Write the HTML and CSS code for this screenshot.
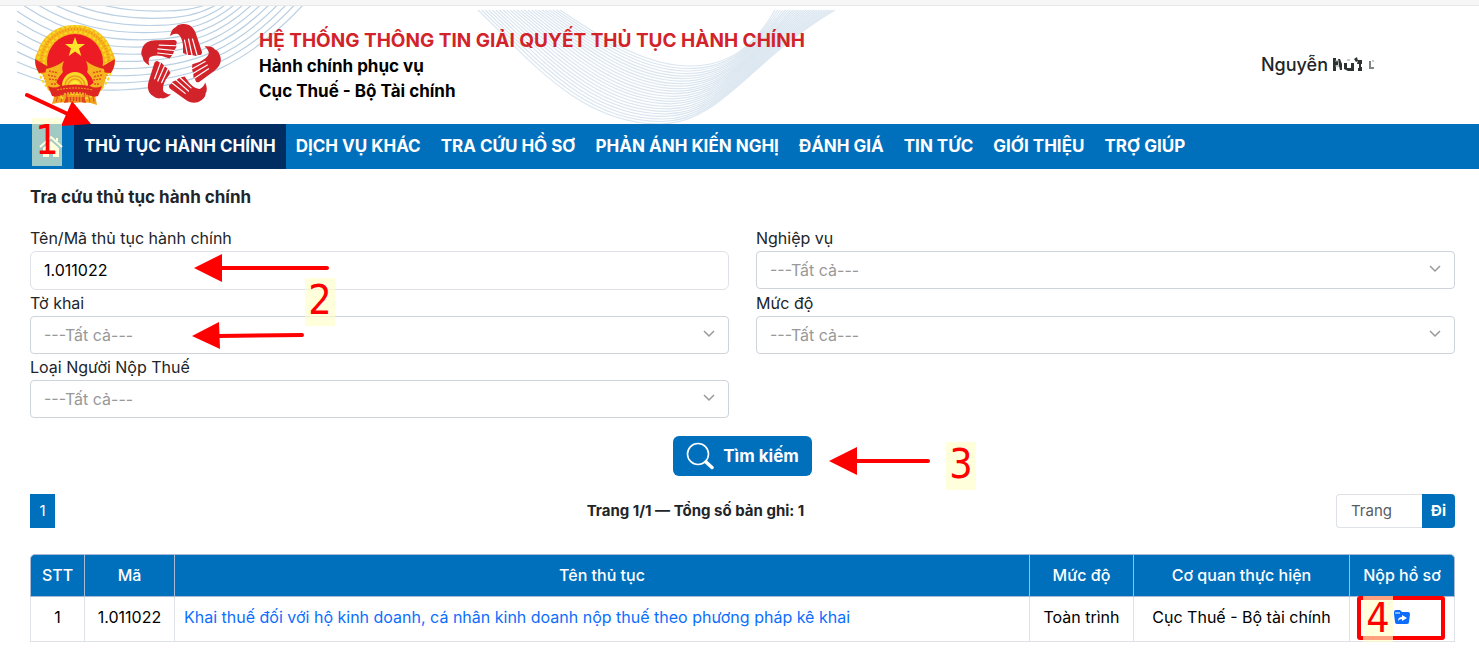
FILE: index.html
```html
<!DOCTYPE html>
<html lang="vi">
<head>
<meta charset="utf-8">
<meta name="viewport" content="width=device-width, initial-scale=1">
<title>Thủ tục hành chính</title>
<link rel="stylesheet" href="styles.css">
</head>
<body>
<div class="topstrip"></div>
<header class="header">
  <svg class="waves" width="860" height="118" viewBox="0 6 860 118" aria-hidden="true">
    <g id="waves-left" fill="none" stroke="#b9cfe2" stroke-width="1.2"></g>
    <g id="waves-mid" fill="none" stroke="#dbe6f0" stroke-width="1.2"></g>
  </svg>
  <div class="logos">
    <svg width="82" height="82" viewBox="0 0 82 82" role="img" aria-label="Quốc huy">
      <path d="M22 66L18 80Q29 77 41 79Q54 77 63 81L60 66Z" fill="#f4a21c"/>
      <path d="M25 68l-3 10M29 68l-2 10M33 69l-1 9M50 69l1 9M54 68l2 10M58 67l2 11" stroke="#dc5a1e" fill="none"/>
      <path d="M41 1C60 1 73 12 78 27C80 31 81 33 81 37C81 44 77 49 73 51L68 66H14L9 51C5 49 1 44 1 37C1 33 2 31 4 27C9 12 22 1 41 1Z" fill="#f8b81a"/>
      <circle cx="41" cy="39" r="37" fill="none" stroke="#f3dd2c" stroke-width="2" stroke-dasharray="3 2"/>
      <circle cx="41" cy="39" r="34" fill="none" stroke="#ea8d1d" stroke-width="2" stroke-dasharray="1 2"/>
      <circle cx="41" cy="39" r="31" fill="none" stroke="#f6dc25" stroke-width="2" stroke-dasharray="3 2"/>
      <circle cx="41" cy="38" r="28" fill="#ed1c24"/>
      <path d="M41 13l2.500 7h7.500l-6 4.500 2.300 7.500-6.300-4.500-6.300 4.500 2.300-7.500-6-4.500h7.500z" fill="#fde32b"/>
      <path d="M1 35l12 7 12-5-8 11-12 1Q1 43 1 35zM81 35l-12 7-12-5 8 11 12 1q4-6 4-14z" fill="#e2231f"/>
      <path d="M12 45q10-2 18-8q-3 7-1 11l-4 5q-4 6-3 13l-7 1q-6-10-3-22zM70 45q-10-2-18-8q3 7 1 11l4 5q4 6 3 13l7 1q6-10 3-22z" fill="#f5b31f"/>
      <path d="M15 47l9 2M14 51l9 2M15 55l8 1M17 60l6 0M67 47l-9 2M68 51l-9 2M67 55l-8 1M65 60l-6 0" stroke="#df541c" stroke-width="1.500" stroke-dasharray="2 1"/>
      <path d="M28 62a13 14 0 0 1 26 0z" fill="#f9d92a"/>
      <path d="M31 62a10 10 0 0 1 20 0M34 62a7 7 0 0 1 14 0" fill="none" stroke="#ef9d1e" stroke-width="1.500"/>
      <circle cx="41" cy="61" r="4" fill="#fdeb35"/>
      <path d="M14 62q6 3 12 0q15-3 30 0q6 3 12 0l-4 10q-5 2-9-1q-14-3-28 0q-4 3-9 1z" fill="#df281f"/>
      <path d="M23 66q18-4 36 0" fill="none" stroke="#f4a51f" stroke-dasharray="2 1"/>
      <path d="M30 70q11-2 22 0" fill="none" stroke="#f2a524" stroke-width="2" stroke-dasharray="2 1"/>
      <path d="M32 73h18l2 6-11-2-11 2z" fill="#e2441f"/>
      <path d="M35 73v5M38 73v5M41 73v4M44 73v5M47 73v5" stroke="#f8b81c"/>
    </svg>
    <svg width="82" height="86" viewBox="140 24 82 86" role="img" aria-label="Biểu trưng dịch vụ công">
      <defs>
        <g id="hand">
          <path d="M170 36C171 31 173 28 176 27C178 24 182 24 184 24C190 24 194 28 196 34L202 52Q202 55 200 55H198L196 56L192 55L188 55L183 53L183 45Q182 37 178 34Q174 33 170 36Z" fill="#d2232a"/>
          <path d="M184.500 40l3 15M188.500 39l3.500 16M192.500 39l4.500 16" stroke="#fff" stroke-width="1.200" stroke-linecap="round"/>
        </g>
      </defs>
      <use href="#hand"/>
      <use href="#hand" transform="rotate(72 180 65)"/>
      <use href="#hand" transform="rotate(144 180 65)"/>
      <use href="#hand" transform="rotate(216 180 65)"/>
      <use href="#hand" transform="rotate(288 180 65)"/>
    </svg>
  </div>
  <div class="brand">
    <h1>HỆ THỐNG THÔNG TIN GIẢI QUYẾT THỦ TỤC HÀNH CHÍNH</h1>
    <p>Hành chính phục vụ</p>
    <p>Cục Thuế - Bộ Tài chính</p>
  </div>
  <div class="user">Nguyễn
    <svg width="46" height="18" viewBox="0 0 46 18" aria-hidden="true">
      <g fill="#2d3330">
        <path d="M1 2h3v3h2v4H4v6H1zM6 3h2l2 5v6H8l-1-4zM12 7h3v5h4V7h3v8h-6l-4-2zM22 3l3-2 1 4-2 1z"/>
        <path d="M26 4h4v4h-1v3h1v4h-4v-3h1V8h-2z"/>
        <path d="M37 5h2v6h3v2h-5z" opacity=".6"/>
      </g>
      <path d="M3 5h4M3 10h4M15 4h3M40 5h2" stroke="#8f9894"/>
    </svg>
  </div>
</header>

<nav class="nav">
  <a class="home" href="#" aria-label="Trang chủ">
    <svg width="24" height="23" viewBox="0 0 24 23" aria-hidden="true">
      <path d="M1 12L12 2l11 10M18 6V3" fill="none" stroke="#fff" stroke-width="2"/>
      <path d="M12 6l8 7v9h-6v-6h-4v6H4v-9z" fill="#fff"/>
    </svg>
  </a>
  <a class="active" href="#">THỦ TỤC HÀNH CHÍNH</a>
  <a href="#">DỊCH VỤ KHÁC</a>
  <a href="#">TRA CỨU HỒ SƠ</a>
  <a href="#">PHẢN ÁNH KIẾN NGHỊ</a>
  <a href="#">ĐÁNH GIÁ</a>
  <a href="#">TIN TỨC</a>
  <a href="#">GIỚI THIỆU</a>
  <a href="#">TRỢ GIÚP</a>
</nav>

<main class="main">
  <h2>Tra cứu thủ tục hành chính</h2>
  <form class="form">
    <div class="field">
      <label for="name">Tên/Mã thủ tục hành chính</label>
      <input id="name" type="text" value="1.011022">
    </div>
    <div class="field">
      <label for="area">Nghiệp vụ</label>
      <div class="pick"><select id="area"><option>---Tất cả---</option></select>
        <svg width="14" height="8" viewBox="0 0 14 8" aria-hidden="true"><path d="M2 1l5 5 5-5"/></svg></div>
    </div>
    <div class="field">
      <label for="decl">Tờ khai</label>
      <div class="pick"><select id="decl"><option>---Tất cả---</option></select>
        <svg width="14" height="8" viewBox="0 0 14 8" aria-hidden="true"><path d="M2 1l5 5 5-5"/></svg></div>
    </div>
    <div class="field">
      <label for="level">Mức độ</label>
      <div class="pick"><select id="level"><option>---Tất cả---</option></select>
        <svg width="14" height="8" viewBox="0 0 14 8" aria-hidden="true"><path d="M2 1l5 5 5-5"/></svg></div>
    </div>
    <div class="field">
      <label for="payer">Loại Người Nộp Thuế</label>
      <div class="pick"><select id="payer"><option>---Tất cả---</option></select>
        <svg width="14" height="8" viewBox="0 0 14 8" aria-hidden="true"><path d="M2 1l5 5 5-5"/></svg></div>
    </div>
    <div class="submit">
      <button type="button" class="search">
        <svg width="28" height="28" viewBox="0 0 28 28" fill="none" stroke="#fff" stroke-linecap="round" aria-hidden="true">
          <circle cx="12" cy="12" r="10.500" stroke-width="1.600"/><path d="M20 20l6 5.500" stroke-width="3.500"/>
        </svg>
        Tìm kiếm
      </button>
    </div>
  </form>

  <div class="pager">
    <a class="page" href="#">1</a>
    <strong>Trang 1/1 — Tổng số bản ghi: 1</strong>
    <form class="goto">
      <input type="text" placeholder="Trang" aria-label="Trang">
      <button type="button">Đi</button>
    </form>
  </div>

  <table class="table">
    <colgroup><col class="c-no"><col class="c-code"><col><col class="c-level"><col class="c-org"><col class="c-act"></colgroup>
    <thead>
      <tr><th>STT</th><th>Mã</th><th>Tên thủ tục</th><th>Mức độ</th><th>Cơ quan thực hiện</th><th>Nộp hồ sơ</th></tr>
    </thead>
    <tbody>
      <tr>
        <td>1</td><td>1.011022</td>
        <td class="name"><a href="#">Khai thuế đối với hộ kinh doanh, cá nhân kinh doanh nộp thuế theo phương pháp kê khai</a></td>
        <td>Toàn trình</td><td>Cục Thuế - Bộ tài chính</td>
        <td class="act">
          <a href="#" aria-label="Nộp hồ sơ"><svg width="18" height="16" viewBox="0 0 18 16" aria-hidden="true">
            <path d="M1 3Q1 1 3 1h4l2 2h6q2 0 2 2l-1 8q0 2-2 2H4q-2 0-2-2L1 5z" fill="#0d6efd"/>
            <path d="M2 4h5" stroke="#fff"/>
            <path d="M5 12q0-4 4-4V6l5 3-5 3v-2q-3 0-4 2z" fill="#fff"/>
          </svg></a>
          <span class="frame"></span>
          <span class="tag tag4">4</span>
        </td>
      </tr>
    </tbody>
  </table>
</main>

<svg class="arrows" width="940" height="500" viewBox="0 0 940 500" aria-hidden="true">
  <g stroke="#f00" stroke-width="4" stroke-linecap="round">
    <path d="M27 95L70 115M220 268H327M218 336L302 335M855 461H928"/>
  </g>
  <g fill="#f00">
    <path d="M91 124L72 101L61 126Z"/>
    <path d="M194 268L222 254V282Z"/>
    <path d="M192 336L219 322L220 349Z"/>
    <path d="M829 461L857 447V475Z"/>
  </g>
</svg>
<span class="tag tag1">1</span>
<span class="tag tag2">2</span>
<span class="tag tag3">3</span>
<script src="waves.js"></script>
</body>
</html>
```
FILE: styles.css
```css
* { box-sizing: border-box; }
body {
  margin: 0;
  position: relative;
  background: #fff;
  color: #212529;
  font: 16px/24px Inter, "Noto Sans", sans-serif;
}
a { text-decoration: none; }
input, select, button { font: inherit; margin: 0; }
h1, h2, p { margin: 0; }

.topstrip { height: 6px; background: #f6f6f6; border-bottom: 1px solid #e9e9e9; }

.header { position: relative; display: flex; height: 118px; padding: 18px 24px 0 34px; }
.waves { position: absolute; left: 0; top: 0; }
.logos { position: relative; display: flex; gap: 24px; }
.brand { position: relative; padding: 4px 0 0 37px; color: #000; font-size: 17px; font-weight: 700; line-height: 25px; }
.brand h1 { color: #d2232a; font-size: 19px; font-weight: 700; line-height: 26px; }
.user { display: flex; gap: 4px; align-items: center; height: 82px; margin-left: auto; padding-right: 77px; font-size: 18px; font-weight: 500; }

.nav { display: flex; height: 45px; background: #0070bd; padding-left: 30px; }
.nav a { display: flex; align-items: center; padding: 0 10px 2px; color: #fff; font-size: 17px; font-weight: 700; white-space: nowrap; }
.nav .home { width: 44px; padding: 0 9px; }
.nav .active { background: #002d62; }

.main { padding: 15px 24px 0 30px; }
h2 { font-size: 17px; font-weight: 700; line-height: 26px; }
.form { display: grid; grid-template-columns: 1fr 1fr; column-gap: 27px; row-gap: 1px; padding-top: 16px; }
.field label { display: block; line-height: 25px; }
.field input { display: block; width: 100%; height: 39px; padding: 0 13px 2px; border: 1px solid #dee2e6; border-radius: 6px; background: #fff; color: #000; }
.pick { position: relative; }
.pick select { display: block; appearance: none; width: 100%; height: 38px; padding: 0 13px; border: 1px solid #ced4da; border-radius: 4px; background: #fff; color: #999; }
.pick svg { position: absolute; right: 13px; top: 14px; fill: none; stroke: #999; stroke-width: 1.5; pointer-events: none; }
.submit { grid-column: 1 / -1; display: flex; justify-content: center; padding-top: 17px; }
.search { display: flex; align-items: center; gap: 9px; height: 40px; padding: 0 13px; border: 0; border-radius: 6px; background: #0070bd; color: #fff; font-size: 17px; font-weight: 700; }

.pager { display: flex; justify-content: space-between; align-items: center; padding-top: 18px; font-size: 15px; }
.pager .page { width: 25px; background: #0070bd; color: #fff; line-height: 34px; text-align: center; }
.pager strong { font-weight: 700; }
.goto { display: flex; width: 119px; height: 34px; }
.goto input { flex: 1; min-width: 0; padding: 0 14px; border: 1px solid #dee2e6; border-right: 0; border-radius: 4px 0 0 4px; background: #fff; }
.goto input::placeholder { color: #595c5f; opacity: 1; }
.goto button { width: 33px; padding: 0; border: 0; border-radius: 0 4px 4px 0; background: #0070bd; color: #fff; font-weight: 700; }

.table { width: 100%; margin-top: 26px; table-layout: fixed; border-collapse: separate; border-spacing: 0; color: #000; }
.c-no { width: 55px; }
.c-code { width: 90px; }
.c-level { width: 104px; }
.c-org { width: 216px; }
.c-act { width: 105px; }
.table th { height: 43px; padding: 0 0 2px; border: 1px solid #a9b9d6; border-left-width: 0; background: #0070bd; color: #fff; font-weight: 500; }
.table td { height: 45px; padding: 0 0 4px; border: 1px solid #dee2e6; border-width: 0 1px 1px 0; text-align: center; }
.table th:first-child, .table td:first-child { border-left-width: 1px; }
.table th:first-child { border-top-left-radius: 5px; }
.table th:last-child { border-top-right-radius: 5px; }
.table .name { padding-left: 9px; text-align: left; }
.table .name a { color: #0d6efd; }
.table .act { position: relative; }
.act svg { display: block; margin: 0 auto; }
.frame { position: absolute; left: 7px; top: -1px; width: 88px; height: 44px; border: 4px solid #f00; border-radius: 3px; }

.arrows { position: absolute; left: 0; top: 0; pointer-events: none; }
.tag { position: absolute; width: 30px; height: 48px; background: rgba(255, 255, 200, .63); color: #f00; font: 41px/44px "DejaVu Sans Condensed", "DejaVu Sans", sans-serif; text-align: center; }
.tag1 { left: 32px; top: 118px; }
.tag2 { left: 305px; top: 278px; }
.tag3 { left: 946px; top: 442px; }
.tag4 { left: 13px; top: -1px; }
```
FILE: waves.js
```js
const NS = "http://www.w3.org/2000/svg";

// Draws a family of curves blended between two cubic outlines.
function blend(id, from, to, count) {
  const group = document.getElementById(id);
  for (let i = 0; i < count; i++) {
    const t = i / (count - 1);
    const p = from.map((v, k) => (v + (to[k] - v) * t).toFixed(1));
    const path = document.createElementNS(NS, "path");
    path.setAttribute("d", `M${p[0]} ${p[1]}C${p.slice(2, 8).join(" ")}C${p.slice(8).join(" ")}`);
    group.appendChild(path);
  }
}

blend("waves-left",
  [17, -40, 70, 8, 130, 12, 165, 11, 185, 11, 200, 8, 212, 2],
  [17, 72, 60, 89, 90, 91, 120, 90, 200, 87, 250, 62, 304, 4], 12);
blend("waves-mid",
  [560, 10, 610, 44, 650, 66, 690, 66, 730, 66, 755, 45, 775, 10],
  [478, 10, 530, 60, 580, 124, 660, 124, 720, 124, 750, 60, 835, 10], 24);
```
